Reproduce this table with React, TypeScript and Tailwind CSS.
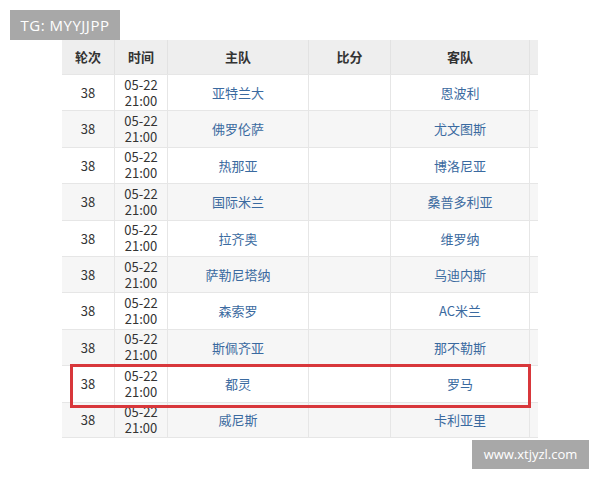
import React from "react";

const rows: [string, string][] = [
  ["亚特兰大", "恩波利"],
  ["佛罗伦萨", "尤文图斯"],
  ["热那亚", "博洛尼亚"],
  ["国际米兰", "桑普多利亚"],
  ["拉齐奥", "维罗纳"],
  ["萨勒尼塔纳", "乌迪内斯"],
  ["森索罗", "AC米兰"],
  ["斯佩齐亚", "那不勒斯"],
  ["都灵", "罗马"],
  ["威尼斯", "卡利亚里"],
];

const cols = "grid grid-cols-[53px_53px_141px_82px_139px_8px]";

export default function App() {
  return (
    <div
      className="relative w-[600px] h-[480px] bg-white overflow-hidden"
      style={{ fontFamily: '"Microsoft YaHei", "Noto Sans CJK SC", "Noto Sans", sans-serif' }}
    >
      <div className="pt-[40px] pl-[62px]">
        <div className="relative w-[476px]">
          <div className={`${cols} h-[34px] bg-[#eeeeee] text-[13px] font-bold text-[#333]`}>
            {["轮次", "时间", "主队", "比分", "客队", ""].map((h, i) => (
              <div
                key={i}
                className={`flex items-center justify-center ${i < 5 ? "border-r border-[#e2e2e2]" : ""}`}
              >
                {h}
              </div>
            ))}
          </div>
          {rows.map(([home, away], idx) => (
            <div
              key={idx}
              className={`${cols} h-[36.4px] border-t border-[#e6e6e6] text-[13px] ${
                idx % 2 === 1 ? "bg-[#f6f6f6]" : "bg-white"
              } ${idx === rows.length - 1 ? "border-b" : ""}`}
            >
              <div className="flex items-center justify-center border-r border-[#e6e6e6] text-[#333]">38</div>
              <div className="flex flex-col items-center justify-center border-r border-[#e6e6e6] text-[#333] leading-[16px]">
                <span>05-22</span>
                <span>21:00</span>
              </div>
              <div className="flex items-center justify-center border-r border-[#e6e6e6] text-[#3a6aa0]">{home}</div>
              <div className="border-r border-[#e6e6e6]"></div>
              <div className="flex items-center justify-center border-r border-[#e6e6e6] text-[#3a6aa0]">{away}</div>
              <div></div>
            </div>
          ))}
          <div className="absolute left-[8px] top-[324px] w-[461px] h-[44px] border-[3px] border-[#d8373b]"></div>
        </div>
      </div>

      <div
        className="absolute left-[10px] top-[10px] w-[110px] h-[30px] bg-[#a8a8a8] flex items-center justify-center text-white text-[15px] tracking-[0.5px]"
        style={{ fontFamily: '"Open Sans", "Noto Sans", sans-serif' }}
      >
        TG: MYYJJPP
      </div>
      <div
        className="absolute left-[472px] top-[440px] w-[117px] h-[29px] bg-[#a8a8a8] flex items-center justify-center text-white text-[13px]"
        style={{ fontFamily: '"Open Sans", "Noto Sans", sans-serif' }}
      >
        www.xtjyzl.com
      </div>
    </div>
  );
}
